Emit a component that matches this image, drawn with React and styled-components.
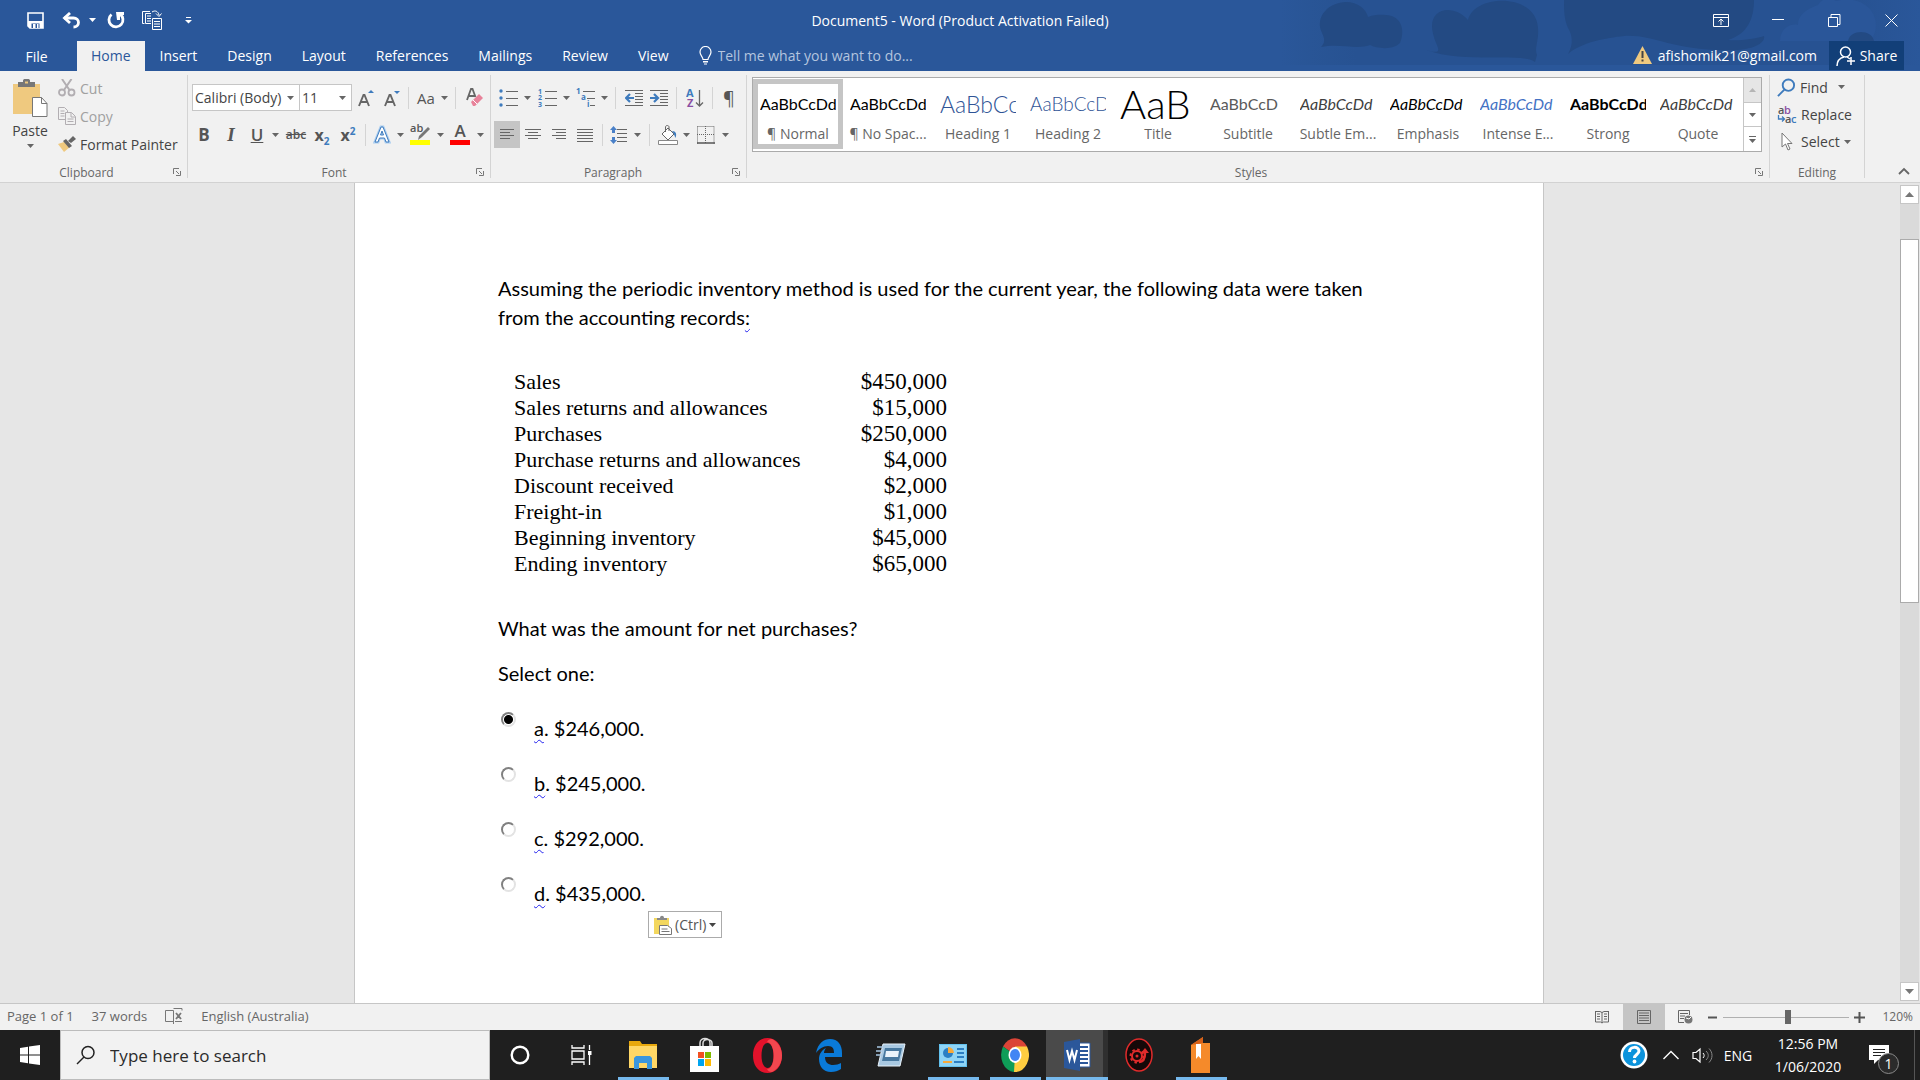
import React from "react";
import styled, { createGlobalStyle, css } from "styled-components";

const UI = `"Open Sans", "Noto Sans", sans-serif`;
const BODY = `Lato, "Open Sans", sans-serif`;
const SERIF = `"Liberation Serif", serif`;

const Global = createGlobalStyle`
  *, *::before, *::after { box-sizing: border-box; }
  body { margin: 0; font-family: ${UI}; font-size: 14px; color: #444; background: #e6e6e6; }
  button, input, select { font: inherit; color: inherit; }
  button { border: 0; background: none; padding: 0; }
  svg { display: block; flex: none; }
`;

const Shell = styled.div`
  height: 100vh;
  display: flex;
  flex-direction: column;
  overflow: hidden;
`;

/* ---------- header ---------- */
const Header = styled.header`
  position: relative;
  background: #2a579a;
  color: #fff;
`;
const Clouds = styled.svg`
  position: absolute;
  top: 0;
  right: 0;
`;
const TitleBar = styled.div`
  position: relative;
  display: grid;
  grid-template-columns: 1fr auto 1fr;
  align-items: center;
  height: 40px;
`;
const QuickAccess = styled.div`
  display: flex;
  align-items: center;
  padding-left: 18px;
`;
const Title = styled.h1`
  margin: 0;
  font-size: 14px;
  font-weight: 400;
`;
const WindowButtons = styled.div`
  display: flex;
  justify-content: flex-end;
`;
const Slot = styled.button`
  display: flex;
  align-items: center;
  justify-content: center;
  width: ${(p) => p.$w}px;
  height: ${(p) => p.$h || 27}px;
  background: ${(p) => (p.$on ? "#c5c5c5" : "transparent")};
  flex: none;
`;
const TabRow = styled.nav`
  position: relative;
  display: flex;
  height: 31px;
  padding-top: 1px;
`;
const Tab = styled.button`
  padding: 0 15px 2px;
  height: 30px;
  font-size: 14px;
  color: ${(p) => (p.$on ? "#2b579a" : "#fff")};
  background: ${(p) => (p.$on ? "#f1f1f1" : "transparent")};
  ${(p) => p.$on && css`padding: 0 14px 2px;`}
  ${(p) => p.$file && css`width: 77px; padding: 0 4px 0 0;`}
`;
const TellMe = styled.label`
  display: flex;
  align-items: center;
  gap: 6px;
  padding: 0 0 2px 15px;
  flex: 1;
  input {
    width: 240px;
    padding: 0;
    border: 0;
    outline: 0;
    background: none;
  }
  input::placeholder { color: #b4c5df; opacity: 1; }
`;
const Account = styled.button`
  display: flex;
  align-items: center;
  gap: 6px;
  margin-right: 12px;
  padding-bottom: 2px;
`;
const Share = styled.button`
  display: flex;
  align-items: center;
  justify-content: center;
  gap: 4px;
  width: 75px;
  height: 29px;
  margin-right: 16px;
  background: #123f78;
`;

/* ---------- ribbon ---------- */
const Ribbon = styled.section`
  display: flex;
  height: 112px;
  padding: 4px 0;
  background: #f1f1f1;
  border-bottom: 1px solid #d2d2d2;
`;
const Group = styled.div`
  position: relative;
  display: flex;
  flex-direction: column;
  width: ${(p) => (p.$w ? p.$w + "px" : "auto")};
  flex: ${(p) => (p.$w ? "none" : "1")};
  border-right: 1px solid #d4d4d4;
  padding-left: ${(p) => p.$pad || 0}px;
`;
const GroupBody = styled.div`
  flex: 1;
  display: flex;
  min-height: 0;
`;
const GroupFoot = styled.div`
  display: flex;
  align-items: center;
  height: 16px;
  margin-bottom: -2px;
  font-size: 12px;
  color: #666;
  span { flex: 1; text-align: center; }
  button { margin-right: 6px; }
`;
const PasteButton = styled.button`
  width: 56px;
  display: flex;
  flex-direction: column;
  align-items: center;
  padding: 4px 0 0 4px;
  gap: 3px;
  line-height: 20px;
`;
const ClipList = styled.div`
  display: flex;
  flex-direction: column;
  button {
    display: flex;
    align-items: center;
    gap: 4px;
    height: 28px;
    padding: 0 0 2px 2px;
    white-space: nowrap;
  }
  button:disabled { color: #a0a0a0; }
`;
const Rows = styled.div`
  display: flex;
  flex-direction: column;
  gap: 10px;
  padding-top: 9px;
`;
const Row = styled.div`
  display: flex;
  align-items: center;
  height: 27px;
`;
const Sep = styled.span`
  width: ${(p) => p.$w}px;
  height: 22px;
  display: flex;
  justify-content: center;
  &::before { content: ""; width: 1px; background: #d4d4d4; }
`;
const Combo = styled.div`
  display: flex;
  align-items: center;
  width: ${(p) => p.$w}px;
  height: 27px;
  padding-right: 5px;
  background: #fff;
  border: 1px solid #c6c6c6;
  & + & { border-left: 0; }
  select {
    flex: 1;
    min-width: 0;
    appearance: none;
    border: 0;
    outline: 0;
    padding: 0 0 0 2px;
    background: none;
    overflow: hidden;
  }
`;
const Glyph = styled.span`
  font-size: ${(p) => p.$s || 17}px;
  line-height: 20px;
  font-weight: ${(p) => p.$b || 400};
  font-style: ${(p) => (p.$i ? "italic" : "normal")};
  font-family: ${(p) => (p.$serif ? SERIF : UI)};
  text-decoration: ${(p) => p.$d || "none"};
  color: ${(p) => p.$c || "#555"};
  sub, sup { font-size: 10px; line-height: 0; color: #3e7bbd; }
`;
const Gallery = styled.div`
  flex: 1;
  display: flex;
  height: 75px;
  margin: 2px 7px 0 5px;
  background: #fff;
  border: 1px solid #ababab;
`;
const StyleList = styled.div`
  flex: 1;
  display: flex;
  overflow: hidden;
`;
const StyleItem = styled.button`
  display: flex;
  flex-direction: column;
  align-items: center;
  width: 90px;
  height: 70px;
  margin-top: 1px;
  flex: none;
  border: 5px solid ${(p) => (p.$on ? "#c5c5c5" : "transparent")};
  color: #666;
  white-space: nowrap;
  line-height: 20px;
`;
const Sample = styled.span`
  display: flex;
  align-items: center;
  width: 76px;
  height: 40px;
  overflow: hidden;
  font-family: ${BODY};
  font-size: ${(p) => p.$s || 16}px;
  line-height: 40px;
  color: ${(p) => p.$c || "#000"};
  font-weight: ${(p) => p.$b || 400};
  font-style: ${(p) => (p.$i ? "italic" : "normal")};
`;
const GalleryScroll = styled.div`
  width: 18px;
  display: flex;
  flex-direction: column;
  border-left: 1px solid #c6c6c6;
  button {
    flex: 1;
    display: flex;
    align-items: center;
    justify-content: center;
  }
  button:first-child { background: #e6e6e6; }
  button + button { border-top: 1px solid #c6c6c6; }
`;
const EditList = styled.div`
  display: flex;
  flex-direction: column;
  padding-left: 7px;
  button {
    display: flex;
    align-items: center;
    gap: 4px;
    height: 27px;
    padding-bottom: 2px;
  }
`;
const Collapse = styled.div`
  width: 55px;
  display: flex;
  align-items: flex-end;
  justify-content: flex-end;
  padding: 0 10px 3px 0;
`;

/* ---------- document ---------- */
const Workspace = styled.main`
  flex: 1;
  display: flex;
  min-height: 0;
  background: #e6e6e6;
`;
const Canvas = styled.div`
  flex: 1;
  display: flex;
  justify-content: center;
  min-width: 0;
  padding-right: 2px;
  overflow: hidden;
`;
const Page = styled.article`
  position: relative;
  width: 1190px;
  padding: 91px 144px 0 143px;
  background: #fff;
  border: solid #c6c6c6;
  border-width: 0 1px;
  font-family: ${BODY};
  font-size: 20px;
  line-height: 29px;
  color: #000;
  p { margin: 0 0 16px; }
`;
const Wavy = styled.span`
  text-decoration: underline wavy #2222ee 1px;
  text-underline-offset: 3px;
`;
const Ledger = styled.table`
  width: 433px;
  margin: 37px 0 37px 16px;
  border-collapse: collapse;
  font-family: ${SERIF};
  font-size: 22px;
  line-height: 26px;
  td, th { padding: 0; font-weight: 400; text-align: left; }
  td { font-size: 23px; text-align: right; }
`;
const Options = styled.fieldset`
  margin: 0;
  padding: 0;
  border: 0;
  legend { padding: 0; margin-bottom: 12px; }
`;
const Option = styled.label`
  display: flex;
  align-items: flex-start;
  gap: 18px;
  height: 55px;
  padding-left: 3px;
  span.text { padding-top: 14px; }
  input {
    appearance: none;
    width: 15px;
    height: 15px;
    margin: 12px 0 0;
    border: 2px solid;
    border-color: #808080 #e3e3e3 #e3e3e3 #808080;
    border-radius: 50%;
    background: #fff;
  }
  input:checked { background: radial-gradient(circle, #000 4px, #fff 5px); }
`;
const PasteTag = styled.button`
  position: absolute;
  left: 293px;
  top: 728px;
  display: flex;
  align-items: center;
  gap: 3px;
  width: 74px;
  height: 27px;
  padding-left: 4px;
  background: #fff;
  border: 1px solid #ababab;
  font-family: ${UI};
  font-size: 14px;
  color: #555;
`;
const ScrollBar = styled.div`
  width: 20px;
  padding: 2px 1px 2px 0;
  display: flex;
  flex-direction: column;
`;
const ScrollButton = styled.button`
  height: 19px;
  display: flex;
  align-items: center;
  justify-content: center;
  background: #fff;
  border: 1px solid #c6c6c6;
`;
const Track = styled.div`
  flex: 1;
  padding-top: 35px;
  background: #dadada;
`;
const Thumb = styled.div`
  height: 49%;
  background: #fff;
  border: 1px solid #ababab;
`;

/* ---------- status bar ---------- */
const Status = styled.footer`
  display: flex;
  align-items: center;
  height: 27px;
  padding: 0 7px;
  background: #f1f1f1;
  border-top: 1px solid #c6c6c6;
  font-size: 13px;
  line-height: 24px;
  color: #666;
`;
const StatusLeft = styled.div`
  flex: 1;
  display: flex;
  align-items: center;
  gap: 18px;
  padding-bottom: 2px;
`;
const ZoomRange = styled.input`
  appearance: none;
  width: 126px;
  height: 16px;
  margin: 0 4px;
  background: linear-gradient(#b0b0b0, #b0b0b0) center / 100% 1px no-repeat;
  &::-webkit-slider-thumb {
    appearance: none;
    width: 6px;
    height: 14px;
    background: #666;
  }
`;
const Percent = styled.span`
  width: 48px;
  font-size: 12px;
  text-align: right;
`;

/* ---------- taskbar ---------- */
const Taskbar = styled.footer`
  display: flex;
  height: 50px;
  background: #1f1f1f;
  color: #fff;
`;
const Search = styled.label`
  display: flex;
  align-items: center;
  gap: 14px;
  width: 430px;
  padding-left: 15px;
  background: #f2f2f2;
  border: 1px solid #bcbcbc;
  color: #222;
  font-size: 17px;
  input { flex: 1; border: 0; padding: 0; outline: 0; background: none; }
  input::placeholder { color: #2b2b2b; opacity: 1; }
`;
const AppButton = styled.button`
  display: flex;
  align-items: center;
  justify-content: center;
  width: ${(p) => p.$w || 62}px;
  height: 50px;
  background:
    ${(p) => (p.$run ? `linear-gradient(#76b9ed, #76b9ed) bottom / ${p.$on ? 62 : 51}px 3px no-repeat,` : "")}
    ${(p) => (p.$on ? "linear-gradient(90deg, #4a4a4a 57px, #2f2f2f 57px)" : "none")};
`;
const Tray = styled.div`
  flex: 1;
  display: flex;
  justify-content: flex-end;
  align-items: center;
  padding-right: 5px;
`;
const Clock = styled.time`
  width: 96px;
  text-align: center;
  font-size: 14px;
  line-height: 23px;
`;
const ShowDesktop = styled.span`
  height: 50px;
  margin-left: 12px;
  border-left: 1px solid #555;
`;
const BadgeWrap = styled.span`
  position: relative;
`;
const Badge = styled.span`
  position: absolute;
  left: 9px;
  top: 8px;
  width: 21px;
  height: 21px;
  border: 1px solid #8a8a8a;
  border-radius: 50%;
  background: #2b2b2b;
  font-size: 14px;
  line-height: 19px;
  text-align: center;
`;

/* ---------- icons ---------- */
const Svg = ({ w = 18, h = w, children, ...r }) => (
  <svg width={w} height={h} viewBox={`0 0 ${w} ${h}`} fill="none" aria-hidden="true" {...r}>{children}</svg>
);
const Caret = ({ c = "#666", up }) => (
  <Svg w={7} h={4}><path d={up ? "M0 4 3.5 0 7 4z" : "M0 0h7L3.5 4z"} fill={c} /></Svg>
);
const Drop = ({ w = 8 }) => <Slot $w={w} aria-label="More"><Caret /></Slot>;
const Lines = ({ rows, w = 18 }) => (
  <Svg w={w} h={18} stroke="#666">
    {rows.map(([a, b], i) => <path key={i} d={`M${a} ${3.5 + i * 3}H${b}`} />)}
  </Svg>
);
const Launcher = () => (
  <button aria-label="Group settings">
    <Svg w={8} h={8}><path d="M.5 6V.5H6M3 3l3 3M7.5 3v4.5H3" stroke="#777" /></Svg>
  </button>
);
const Foot = ({ children, plain }) => <GroupFoot><span>{children}</span>{!plain && <Launcher />}</GroupFoot>;

const SaveIcon = () => (
  <Svg w={17}><path d="M1 1h15v15H3l-2-2z" stroke="#fff" strokeWidth="1.6" /><path d="M1 9h15v7H3l-2-2z" fill="#fff" /><path d="M4.5 11.5h8V16h-8z" fill="#2a579a" /><path d="M6 12h2.5v4H6zM10 12h1.5v4H10z" fill="#fff" /><path d="M3 2h11v7H3z" fill="#2a579a" /></Svg>
);
const UndoIcon = () => (
  <Svg w={19} h={17}><path d="M2 6h9.500c3 0 5 2 5 4.500S14.500 15 11.500 15" stroke="#fff" strokeWidth="2.800" /><path d="M8 1 2.500 6 8 11" stroke="#fff" strokeWidth="2.800" /></Svg>
);
const RedoIcon = () => (
  <Svg w={18} h={18}><path d="M4.500 3.500a7 7 0 1 0 8.500-.3" stroke="#fff" strokeWidth="2.800" /><path d="M9 1h8v3h-4v5h-3z" fill="#fff" /></Svg>
);
const PagesIcon = () => (
  <Svg w={20} h={20} stroke="#fff"><path d="M8 1.500H.5v12h2M9 3.500H3.500v10H9M5 6h4M5 8.500h4M5 11h4" /><path d="M10.500 8.500h9v11h-9zM12 11.500h6M12 14h6M12 16.500h6" /><path d="M10 2c3-2 6-1 7 3M14 3.500l3 3 2.500-3" /></Svg>
);
const BulbIcon = () => (
  <Svg w={13} h={19}><path d="M4 13.500c0-2.500-3-4-3-7.500a5.500 5.500 0 0 1 11 0c0 3.500-3 5-3 7.500z" stroke="#fff" strokeWidth="1.200" /><path d="M4 15h5v1.500H4zM5 17.500h3v1H5z" fill="#fff" /></Svg>
);
const PasteIcon = () => (
  <Svg w={35} h={39}><path d="M0 5h27v30H0z" fill="#efc97f" /><path d="M5 3h5V1.500C10 .5 11 0 12 0h3c1 0 2 .5 2 1.500V3h5v5H5z" fill="#777" /><path d="M12 2.500h3v2h-3z" fill="#efc97f" /><path d="M19.500 18.500h9l5.500 6v13H19.500z" fill="#fff" stroke="#777" /><path d="M28.500 18.500v6H34" stroke="#777" /></Svg>
);
const CutIcon = () => (
  <Svg w={18} h={18} stroke="#b2aeb2" strokeWidth="1.800"><path d="M4 0l7.500 11M13.500 0 6 11" strokeWidth="2" /><circle cx="4" cy="13.500" r="3" /><circle cx="13.500" cy="13.500" r="3" /></Svg>
);
const CopyIcon = () => (
  <Svg w={18} h={18} stroke="#b2aeb2"><path d="M7 12.500H.5v-12h6l3 3V5M2.500 4h4M2.500 6.500h4M2.500 9h4" /><path d="M7.500 5.500h6l4 4v8h-10zM13 5.500V10h4M9.500 12h6M9.500 14.500h6" /></Svg>
);
const PainterIcon = () => (
  <Svg w={18} h={17}><path d="M0 8l6-2 6 5-6 5z" fill="#efc97f" /><path d="M5 5l3-2 6 7-3 2z" fill="#666" /><path d="M10 5l5-5 3 3-5 4z" fill="#666" /></Svg>
);
const EraserIcon = () => (
  <Svg w={18} h={19}><path d="M1 12 5 1h1.500l3 8M2.500 8h6" stroke="#666" strokeWidth="1.800" /><path d="M5 14l8-8 4 4-8 8H7z" fill="#e8829a" /><path d="M7 12l4 4" stroke="#fff" /></Svg>
);
const SizeIcon = ({ down }) => (
  <Svg w={16} h={18}><path d="M1 17 5.500 6h1L11 17M3 13h6" stroke="#666" strokeWidth="1.900" /><path d={down ? "M10 2h6l-3 3z" : "M10 4h6l-3-3z"} fill="#3e7bbd" /></Svg>
);
const EffectIcon = () => (
  <Svg w={18} h={19}><path d="M2 17 8 2h2l6 15h-3l-1.500-4h-5L5 17zM7.500 10h3L9 6z" stroke="#a9cdf0" strokeWidth="3" /><path d="M2 17 8 2h2l6 15h-3l-1.500-4h-5L5 17zM7.500 10h3L9 6z" fill="#fff" stroke="#3e7bbd" /></Svg>
);
const ColourMark = styled.span`
  position: relative;
  display: flex;
  justify-content: ${(p) => (p.$mid ? "center" : "flex-start")};
  width: 20px;
  height: 21px;
  border-bottom: 5px solid ${(p) => p.$c};
  span { line-height: ${(p) => (p.$mid ? 14 : 8)}px; }
  svg { position: absolute; right: 0; top: 3px; }
`;
const List = ({ kind }) => (
  <Svg w={19} h={19}>
    <path d={kind === "multi" ? "M7 3.500h12M11 10.500h8M14 17.500h5" : "M7 3.500h12M7 10.500h12M7 17.500h12"} stroke="#666" />
    {kind === "dot" && [3, 10, 17].map((y) => <circle key={y} cx="2" cy={y} r="1.700" fill="#3e7bbd" />)}
    {kind !== "dot" && (
      <g fill="#3e7bbd" fontFamily="Open Sans" fontWeight="700" fontSize={kind === "num" ? 7 : 8}>
        <text x="0" y="6">1</text>
        <text x={kind === "num" ? 0 : 5} y="12">{kind === "num" ? "2" : "a"}</text>
        <text x={kind === "num" ? 0 : 11} y="19">{kind === "num" ? "3" : "i"}</text>
      </g>
    )}
  </Svg>
);
const IndentIcon = ({ right }) => (
  <Svg w={19} h={19}><path d="M0 2.500h18M10 5.500h8M10 8.500h8M10 11.500h8M10 14.500h8M0 17.500h18" stroke="#666" /><path d={right ? "M0 10h7M4 6l4 4-4 4" : "M9 10H2M5 6l-4 4 4 4"} stroke="#3e7bbd" strokeWidth="2.200" /></Svg>
);
const SortIcon = () => (
  <Svg w={18} h={20}><g fontFamily="Open Sans" fontWeight="700" fontSize="11"><text x="0" y="9" fill="#3e7bbd">A</text><text x="1" y="19" fill="#8a4fa3">Z</text></g><path d="M13.500 2v16M10 14.500l3.500 3.500 3.500-3.500" stroke="#666" strokeWidth="1.300" /></Svg>
);
const SpacingIcon = () => (
  <Svg w={18} h={20}><path d="M7 4.500h10M7 8.500h10M7 12.500h10M7 16.500h10" stroke="#666" /><path d="M3.500 1 7 5H5v3H2V5H0zM3.500 19 7 15H5v-3H2v3H0z" fill="#4a80c8" /></Svg>
);
const FillIcon = () => (
  <Svg w={21} h={20}><path d="M4 9l6-6 6 6-6 6z" fill="#fff" stroke="#666" /><path d="M7.500 7V2c0-2 3.500-2 3.500 0v4" stroke="#666" /><path d="M14 6c4 0 5 3 3.500 7-1-2-1-4-3.500-7z" fill="#3e7bbd" /><path d="M.5 15.500h19v4H.5z" fill="#fff" stroke="#888" /></Svg>
);
const BorderIcon = () => (
  <Svg w={18} h={18}><path d="M.5.5v17M17 .5v17M.5.5H17M8.500 0v17M0 8.500h17" stroke="#666" strokeDasharray="1 1" /><path d="M0 17h18" stroke="#555" strokeWidth="1.500" /></Svg>
);
const Lens = ({ s = 19, c = "#3e7bbd", sw = 2 }) => (
  <svg width={s} height={s} viewBox="0 0 20 20" fill="none" aria-hidden="true"><circle cx="12" cy="7.500" r="6" stroke={c} strokeWidth={sw} /><path d="M8 12 1 19" stroke={c} strokeWidth={sw} /></svg>
);
const ReplaceIcon = () => (
  <Svg w={20} h={19}><g fontFamily="Open Sans" fontWeight="600" fontSize="11"><text x="1" y="9" fill="#555">a</text><text x="7" y="9" fill="#8a4fa3">b</text><text x="8" y="18" fill="#555">a</text><text x="14" y="18" fill="#3e7bbd">c</text></g><path d="M1.500 10v4H7M5 11.500 7.500 14 5 16.500" stroke="#3e7bbd" strokeWidth="1.300" /></Svg>
);
const CursorIcon = () => (
  <Svg w={20} h={19}><path d="M5 1v14l3.500-3 2.500 6 2-1-2.500-5.500H15z" fill="#fff" stroke="#777" /></Svg>
);

const styleItems = [
  { n: "¶ Normal" }, { n: "¶ No Spac..." },
  { n: "Heading 1", s: 23, c: "#2f5496", b: 300 }, { n: "Heading 2", s: 19, c: "#2f5496", b: 300 },
  { n: "Title", s: 40, t: "AaB", b: 300 }, { n: "Subtitle", s: 16, c: "#5a5a5a", t: "AaBbCcD" },
  { n: "Subtle Em...", i: 1, c: "#404040" }, { n: "Emphasis", i: 1 },
  { n: "Intense E...", i: 1, c: "#4472c4" }, { n: "Strong", b: 700 },
  { n: "Quote", i: 1, c: "#404040" },
];
const ledger = [
  ["Sales", "$450,000"], ["Sales returns and allowances", "$15,000"], ["Purchases", "$250,000"],
  ["Purchase returns and allowances", "$4,000"], ["Discount received", "$2,000"], ["Freight-in", "$1,000"],
  ["Beginning inventory", "$45,000"], ["Ending inventory", "$65,000"],
];
const answers = [["a", "$246,000."], ["b", "$245,000."], ["c", "$292,000."], ["d", "$435,000."]];
const tabs = ["Home", "Insert", "Design", "Layout", "References", "Mailings", "Review", "View"];

/* taskbar apps */
const ExplorerIcon = () => <Svg w={28} h={28}><path d="M0 0h11l2 3h15v24H0z" fill="#e8a80c" /><path d="M0 5h28v22H0z" fill="#ffd766" /><path d="M5 28V17l2-2h14l2 2v11h-5v-6h-8v6z" fill="#3a96dd" /></Svg>;
const StoreIcon = () => <Svg w={30} h={36}><path d="M10 10V6c0-6 10-6 10 0v4M13 10V6c0-5 9-4 9 0v4" stroke="#ddd" strokeWidth="1.500" /><path d="M0 9h29v26H0z" fill="#fff" /><path d="M8 15h6v6H8z" fill="#f25022" /><path d="M15 15h6v6h-6z" fill="#7fba00" /><path d="M8 22h6v7H8z" fill="#00a4ef" /><path d="M15 22h6v7h-6z" fill="#ffb900" /></Svg>;
const OperaIcon = () => <Svg w={29} h={35}><path fillRule="evenodd" d="M14.500 0C6 0 0 7 0 17.500S6 35 14.500 35 29 28 29 17.500 23 0 14.500 0zm0 5c4 0 6 6 6 12.500s-2 12.500-6 12.500-6-6-6-12.500 2-12.500 6-12.500z" fill="#e3122b" /><path d="M19 1c6 3 10 9 10 16.500S25 31 19 34c-3 0-4-1-5-3 9 0 9-26 0-27 1-2 2-3 5-3z" fill="#f2474f" /></Svg>;
const EdgeIcon = () => <Svg w={26} h={33}><path d="M0 14C2 4 8 0 14 0c8 0 12 6 12 14v4H9c0 6 4 8 8 8 3 0 6-1 8-2v6c-3 2-6 3-10 3C7 33 3 27 3 20c0-5 3-9 7-11-1 1-2 3-2 5h10c0-4-1-7-6-7-5 0-9 3-12 7z" fill="#0a7ad8" /></Svg>;
const RunIcon = () => <Svg w={30} h={24}><path d="M7 1h22l-5 22H2z" fill="#a9c9e2" stroke="#e8f2fa" /><path d="M9 5h17l-3 13H6z" fill="#47789f" /><path d="M10 8h13l-1 6H9z" fill="#e9f3fb" /><path d="M1 4h7M0 8h6M0 12h5" stroke="#a8c8e4" strokeWidth="1.500" /></Svg>;
const PanelIcon = () => <Svg w={28} h={23}><path d="M0 0h28v23H0z" fill="#62c1ee" /><path d="M1 1h26v21H1z" fill="#8fd4f6" /><circle cx="9" cy="9" r="5" fill="#2c7fc4" /><path d="M9 9V3a6 6 0 0 1 6 6z" fill="#f8a93a" /><path d="M18 4h7v2h-7zM18 8h7v2h-7zM18 12h7v2h-7z" fill="#2c7fc4" /><path d="M4 18h9" stroke="#f8a93a" strokeWidth="2" /><path d="M15 18h10" stroke="#2c7fc4" strokeWidth="2" /></Svg>;
const ChromeIcon = () => <svg width="28" height="34" viewBox="0 0 28 28" preserveAspectRatio="none" aria-hidden="true"><path d="M14 14 2 7a14 14 0 0 1 24 0z" fill="#db4437" /><path d="M14 14 2 7a14 14 0 0 0 11 21l7-11z" fill="#0f9d58" /><path d="M14 14l-1 14A14 14 0 0 0 26 7H14z" fill="#ffcd40" /><circle cx="14" cy="14" r="6.500" fill="#fff" /><circle cx="14" cy="14" r="5" fill="#4285f4" /></svg>;
const WordIcon = () => <Svg w={27} h={32}><path d="M14 4h12v24H14z" fill="#fff" stroke="#2b579a" /><path d="M16 8h8M16 12h8M16 16h8M16 20h8M16 24h8" stroke="#2b579a" strokeWidth="1.800" /><path d="M0 3l16-3v32L0 29z" fill="#2b579a" /><path d="M3 11l2.500 10L8 12l2.500 9L13 11" stroke="#fff" strokeWidth="2" /></Svg>;
const DriverIcon = () => <Svg w={28} h={34}><ellipse cx="14" cy="17" rx="13" ry="16" fill="#160808" stroke="#e02b2b" strokeWidth="1.500" /><circle cx="12" cy="18" r="5" stroke="#e02b2b" strokeWidth="2" /><circle cx="12" cy="18" r="6.500" stroke="#e02b2b" strokeWidth="2" strokeDasharray="2.500 2.500" /><circle cx="12" cy="18" r="1.500" fill="#e02b2b" /><path d="M14 24c5 0 6-4 6-9" stroke="#e02b2b" strokeWidth="2.500" /><path d="M16 15l4-5 4 5z" fill="#e02b2b" /></Svg>;
const BookIcon = () => <Svg w={20} h={37}><path d="M0 8 12 0v6h7v30H0z" fill="#f58a2a" /><path d="M0 8 12 0v6z" fill="#d4601a" /><path d="M5 7h5v15l-2.500-3L5 22z" fill="#fff" /></Svg>;

const apps = [
  ["File Explorer", ExplorerIcon, 1], ["Microsoft Store", StoreIcon], ["Opera", OperaIcon], ["Edge", EdgeIcon],
  ["Run", RunIcon], ["Control Panel", PanelIcon, 1], ["Chrome", ChromeIcon, 1], ["Word", WordIcon, 1, 1],
  ["Driver Booster", DriverIcon], ["Reader", BookIcon, 1],
];

function Top() {
  return (
    <Header>
      <Clouds width="640" height="65" viewBox="0 0 640 65" aria-hidden="true">
        <defs><linearGradient id="sky"><stop offset="0" stopColor="#27528f" stopOpacity="0" /><stop offset=".12" stopColor="#275292" /><stop offset=".9" stopColor="#275292" /><stop offset="1" stopColor="#275292" stopOpacity="0" /></linearGradient></defs>
        <path d="M0 0h640v65H0z" fill="url(#sky)" />
        <g fill="#234a83">
          <path d="M41 47c4-4 4-8 1-14C34 16 50 2 66 2c12 0 20 7 22 15 8-3 14-2 18-2 14 0 20 14 14 28-8 8-24 5-30 2-14 5-30-2-49 2z" />
          <path d="M146 50c20 6 10-4 8-13-10-30 20-34 34-17C194-6 256-8 258 28c1 14-4 20-1 27l-2 7c-12-10-70 2-109-12z" />
          <path d="M284 0h190c0 18-6 34-26 40 12 1 26-1 36-4 2 8-14 14-30 14-60 2-80-16-110-14-18 2-42 6-56 18 6-10 4-20 0-26-4-9-4-18-4-28z" />
        </g>
        <path d="M500 41c0-12 10-18 18-16 0-12 12-17 20-20 4-7 12-8 18-4 24-6 40 8 40 24 0 10-6 16-6 16z" fill="#2a5699" />
        <path d="M568 41c2-12 24-12 26 0z" fill="#234a83" />
      </Clouds>
      <TitleBar>
        <QuickAccess>
          <Slot $w={34} aria-label="Save"><SaveIcon /></Slot>
          <Slot $w={38} aria-label="Undo"><UndoIcon /></Slot>
          <Slot $w={4} aria-label="Undo list"><Caret c="#fff" /></Slot>
          <Slot $w={44} aria-label="Redo"><RedoIcon /></Slot>
          <Slot $w={28} aria-label="Pages"><PagesIcon /></Slot>
          <Slot $w={44} aria-label="Customise"><Svg w={7} h={7}><path d="M1 .5h5" stroke="#fff" /><path d="M0 3h7L3.5 6.5z" fill="#fff" /></Svg></Slot>
        </QuickAccess>
        <Title>Document5 - Word (Product Activation Failed)</Title>
        <WindowButtons>
          <Slot $w={57} aria-label="Ribbon options"><Svg w={16} h={13} stroke="#fff"><path d="M.5.5h15v12H.5zM.5 3.500h15M8 11V5M5.500 7.500 8 5l2.500 2.500" /></Svg></Slot>
          <Slot $w={57} aria-label="Minimise"><Svg w={12} h={2}><path d="M0 .5h12" stroke="#fff" /></Svg></Slot>
          <Slot $w={57} aria-label="Restore"><Svg w={13} h={13} stroke="#fff"><path d="M.5 3.500h9v9h-9zM3 3V.5h9v10h-2" /></Svg></Slot>
          <Slot $w={57} aria-label="Close"><Svg w={13} h={13} stroke="#fff"><path d="M.5.5l12 12M12.500.5l-12 12" /></Svg></Slot>
        </WindowButtons>
      </TitleBar>
      <TabRow>
        <Tab $file>File</Tab>
        {tabs.map((t) => <Tab key={t} $on={t === "Home"}>{t}</Tab>)}
        <TellMe><BulbIcon /><input aria-label="Tell me" placeholder="Tell me what you want to do..." /></TellMe>
        <Account>
          <Svg w={19} h={18}><path d="M9.500 0 19 18H0z" fill="#efc97f" /><path d="M9.500 5v7M9.500 13.500v2" stroke="#444" strokeWidth="2" /></Svg>
          afishomik21@gmail.com
        </Account>
        <Share>
          <Svg w={20} h={20} stroke="#fff" strokeWidth="1.500"><circle cx="9.500" cy="6" r="5" /><path d="M1 20c0-5 3-8 7-9M11 11l3 2M15 11v8M11 15h8" /></Svg>
          Share
        </Share>
      </TabRow>
    </Header>
  );
}

function RibbonBar() {
  return (
    <Ribbon>
      <Group $w={188}>
        <GroupBody>
          <PasteButton><PasteIcon /><span>Paste</span><Caret /></PasteButton>
          <ClipList>
            <button disabled><CutIcon />Cut</button>
            <button disabled><CopyIcon />Copy</button>
            <button><PainterIcon />Format Painter</button>
          </ClipList>
        </GroupBody>
        <Foot>Clipboard</Foot>
      </Group>
      <Group $w={303} $pad={4}>
        <GroupBody>
          <Rows>
            <Row>
              <Combo $w={108}><select aria-label="Font"><option>Calibri (Body)</option></select><Caret /></Combo>
              <Combo $w={52}><select aria-label="Font size"><option>11</option></select><Caret /></Combo>
              <Slot $w={28} aria-label="Grow font"><SizeIcon /></Slot>
              <Slot $w={24} aria-label="Shrink font"><SizeIcon down /></Slot>
              <Sep $w={8} />
              <Slot $w={28}><Glyph $s={15}>Aa</Glyph></Slot>
              <Drop />
              <Sep $w={14} />
              <Slot $w={26} aria-label="Clear formatting"><EraserIcon /></Slot>
            </Row>
            <Row>
              <Slot $w={24}><Glyph $b={700}>B</Glyph></Slot>
              <Slot $w={30}><Glyph $b={700} $i $serif $s={19}>I</Glyph></Slot>
              <Slot $w={22}><Glyph $b={600} $d="underline">U</Glyph></Slot>
              <Drop w={14} />
              <Slot $w={28}><Glyph $s={12} $b={600} $d="line-through">abc</Glyph></Slot>
              <Slot $w={24}><Glyph $s={16} $b={700}>x<sub>2</sub></Glyph></Slot>
              <Slot $w={28}><Glyph $s={16} $b={700}>x<sup>2</sup></Glyph></Slot>
              <Sep $w={6} />
              <Slot $w={28} aria-label="Text effects"><EffectIcon /></Slot>
              <Drop />
              <Slot $w={32}><ColourMark $c="#ffff00"><Glyph $s={11} $b={600}>ab</Glyph><Svg w={13} h={13}><path d="M1 13l1-4L11 0l2 2-8 8z" fill="#777" /></Svg></ColourMark></Slot>
              <Drop />
              <Slot $w={32}><ColourMark $c="#ff0000" $mid><Glyph $s={17} $b={600}>A</Glyph></ColourMark></Slot>
              <Drop />
            </Row>
          </Rows>
        </GroupBody>
        <Foot>Font</Foot>
      </Group>
      <Group $w={256} $pad={3}>
        <GroupBody>
          <Rows>
            <Row>
              <Slot $w={28} aria-label="Bullets"><List kind="dot" /></Slot><Drop w={10} />
              <Slot $w={30} aria-label="Numbering"><List kind="num" /></Slot><Drop />
              <Slot $w={30} aria-label="Multilevel"><List kind="multi" /></Slot><Drop />
              <Sep $w={14} />
              <Slot $w={24} aria-label="Decrease indent"><IndentIcon /></Slot>
              <Slot $w={26} aria-label="Increase indent"><IndentIcon right /></Slot>
              <Sep $w={8} />
              <Slot $w={30} aria-label="Sort"><SortIcon /></Slot>
              <Sep $w={4} />
              <Slot $w={30}><Glyph $s={18}>¶</Glyph></Slot>
            </Row>
            <Row>
              <Slot $w={26} $on aria-label="Left"><Lines w={16} rows={[[1, 15], [1, 11], [1, 15], [1, 11]]} /></Slot>
              <Slot $w={26} aria-label="Centre"><Lines w={16} rows={[[0, 16], [3, 13], [0, 16], [3, 13]]} /></Slot>
              <Slot $w={26} aria-label="Right"><Lines w={16} rows={[[1, 15], [5, 15], [1, 15], [5, 15]]} /></Slot>
              <Slot $w={26} aria-label="Justify"><Lines w={16} rows={[[0, 16], [0, 16], [0, 16], [0, 16], [0, 16]]} /></Slot>
              <Sep $w={8} />
              <Slot $w={26} aria-label="Line spacing"><SpacingIcon /></Slot><Drop w={10} />
              <Sep $w={14} />
              <Slot $w={24} aria-label="Shading"><FillIcon /></Slot><Drop w={12} />
              <Slot $w={28} aria-label="Borders"><BorderIcon /></Slot><Drop w={10} />
            </Row>
          </Rows>
        </GroupBody>
        <Foot>Paragraph</Foot>
      </Group>
      <Group>
        <GroupBody>
          <Gallery>
            <StyleList>
              {styleItems.map((s, k) => (
                <StyleItem key={s.n} $on={k === 0}>
                  <Sample $s={s.s} $c={s.c} $i={s.i} $b={s.b}>{s.t || "AaBbCcDd"}</Sample>
                  {s.n}
                </StyleItem>
              ))}
            </StyleList>
            <GalleryScroll>
              <button aria-label="Previous styles"><Caret up c="#b5b5b5" /></button>
              <button aria-label="Next styles"><Caret /></button>
              <button aria-label="All styles"><Svg w={7} h={7}><path d="M0 .5h7" stroke="#666" /><path d="M0 3h7L3.5 7z" fill="#666" /></Svg></button>
            </GalleryScroll>
          </Gallery>
        </GroupBody>
        <Foot>Styles</Foot>
      </Group>
      <Group $w={95}>
        <GroupBody>
          <EditList>
            <button><Lens />Find<Drop w={20} /></button>
            <button><ReplaceIcon />Replace</button>
            <button><CursorIcon />Select<Caret /></button>
          </EditList>
        </GroupBody>
        <Foot plain>Editing</Foot>
      </Group>
      <Collapse><button aria-label="Collapse ribbon"><Svg w={12} h={8}><path d="M1 7l5-5 5 5" stroke="#666" strokeWidth="1.8" /></Svg></button></Collapse>
    </Ribbon>
  );
}

function Doc() {
  return (
    <Workspace>
      <Canvas>
        <Page>
          <div>Assuming the periodic inventory method is used for the current year, the following data were taken from the accounting records<Wavy>:</Wavy></div>
          <Ledger>
            <tbody>{ledger.map(([a, b]) => <tr key={a}><th scope="row">{a}</th><td>{b}</td></tr>)}</tbody>
          </Ledger>
          <p>What was the amount for net purchases?</p>
          <Options>
            <legend>Select one:</legend>
            {answers.map(([k, v], i) => (
              <Option key={k}>
                <input type="radio" name="answer" defaultChecked={i === 0} />
                <span className="text"><Wavy>{k}</Wavy>. {v}</span>
              </Option>
            ))}
          </Options>
          <PasteTag>
            <Svg w={19} h={20}><path d="M1 3h15v16H1z" fill="#f3d75e" /><path d="M4 5V3h3c0-3 4-3 4 0h3v2z" fill="#888" /><path d="M6.500 10.500h8l4 3v6h-12z" fill="#fff" stroke="#777" /><path d="M8.500 14h6M8.500 16.500h8" stroke="#777" /></Svg>
            (Ctrl)
            <Caret c="#444" />
          </PasteTag>
        </Page>
      </Canvas>
      <ScrollBar>
        <ScrollButton aria-label="Scroll up"><Svg w={9} h={5}><path d="M0 5 4.500 0 9 5z" fill="#777" /></Svg></ScrollButton>
        <Track><Thumb /></Track>
        <ScrollButton aria-label="Scroll down"><Svg w={9} h={5}><path d="M0 0h9L4.500 5z" fill="#777" /></Svg></ScrollButton>
      </ScrollBar>
    </Workspace>
  );
}

function StatusBar() {
  return (
    <Status>
      <StatusLeft>
        <span>Page 1 of 1</span>
        <span>37 words</span>
        <Svg w={18} h={16} stroke="#777"><path d="M8.500 2.500H.5v11h8V16M8.500 14V2.500M8.500.5h8.500v2M10 13.500h7" /><path d="M11 5l5 6M16 5l-5 6" strokeWidth="1.800" /></Svg>
        <span>English (Australia)</span>
      </StatusLeft>
      <Slot $w={42} $h={26} aria-label="Read mode"><Svg w={14} h={14} stroke="#666"><path d="M0 1.500h5l2 1 2-1h5M.5 1v11h5l1.500 1 1.500-1h5V1M7 2v11M2 4h3M2 6.500h3M2 9h3M9 4h3M9 6.500h3M9 9h3" /></Svg></Slot>
      <Slot $w={42} $h={26} $on aria-label="Print layout"><Svg w={14} h={14} stroke="#666"><path d="M.5.5h13v13H.5zM2 3h10M2 5.500h10M2 8h10M2 10.500h10" /></Svg></Slot>
      <Slot $w={40} $h={26} aria-label="Web layout"><Svg w={15} h={14}><path d="M6 12.500H.5V.5h11V5M2 3.500h8M2 6h5M2 8.500h4" stroke="#666" /><circle cx="10.500" cy="9.500" r="4" fill="#777" /><path d="M8 8l3 1 2-2" stroke="#fff" /></Svg></Slot>
      <Slot $w={14} aria-label="Zoom out"><Svg w={9} h={3}><path d="M0 1.500h9" stroke="#555" strokeWidth="2" /></Svg></Slot>
      <ZoomRange type="range" min="0" max="100" defaultValue="52" aria-label="Zoom" />
      <Slot $w={12} aria-label="Zoom in"><Svg w={11} h={11}><path d="M0 5.500h11M5.500 0v11" stroke="#555" strokeWidth="2" /></Svg></Slot>
      <Percent>120%</Percent>
    </Status>
  );
}

function Tasks() {
  return (
    <Taskbar>
      <AppButton $w={60} aria-label="Start"><Svg w={20} h={20}><path d="M0 3l8-1.200V9.500H0zM9 1.500 20 0v9.500H9zM0 10.500h8v7.700L0 17zM9 10.500h11V20L9 18.500z" fill="#fff" /></Svg></AppButton>
      <Search><Lens s={20} c="#222" sw={1.5} /><input aria-label="Search" placeholder="Type here to search" /></Search>
      <AppButton $w={60} aria-label="Cortana"><Svg w={20} h={20}><circle cx="10" cy="10" r="8.300" stroke="#fff" strokeWidth="2.400" /></Svg></AppButton>
      <AppButton aria-label="Task view"><Svg w={21} h={20} stroke="#fff" strokeWidth="1.300"><path d="M1 0v3h12V0M1 6h12v8H1zM1 20v-3h12v3M18.500 0v5M18.500 10v10" /><path d="M17 6h3.500v4H17z" fill="#fff" stroke="none" /></Svg></AppButton>
      {apps.map(([n, Icon, run, on]) => <AppButton key={n} $run={run} $on={on} aria-label={n}><Icon /></AppButton>)}
      <Tray>
        <Slot $w={40} aria-label="Help"><Svg w={28} h={28}><circle cx="14" cy="14" r="13.500" fill="#fff" /><circle cx="14" cy="14" r="11" fill="#0c93dc" /><path d="M9.500 11c0-6 9.500-6 9.500-1 0 3.500-4.500 3.500-4.500 7" stroke="#fff" strokeWidth="3" /><circle cx="14.500" cy="20.500" r="1.900" fill="#fff" /></Svg></Slot>
        <Slot $w={34} aria-label="Hidden icons"><Svg w={16} h={10}><path d="M.5 9 8 1.500 15.500 9" stroke="#fff" strokeWidth="1.400" /></Svg></Slot>
        <Slot $w={28} aria-label="Volume"><Svg w={21} h={17}><path d="M1 5.500h3L8 2v13l-4-3.500H1z" stroke="#fff" strokeWidth="1.200" /><path d="M11 6c1.500 1.500 1.500 3.500 0 5" stroke="#fff" /><path d="M14 4c3 3 3 6 0 9M17 1.500c4 4 4 10 0 14" stroke="#888" /></Svg></Slot>
        <Slot $w={44}>ENG</Slot>
        <Clock>12:56 PM<br />1/06/2020</Clock>
        <Slot $w={46} aria-label="Notifications"><BadgeWrap><Svg w={20} h={20}><path d="M0 0h20v15H9l-4 4v-4H0z" fill="#fff" /><path d="M4 4.500h12M4 7.500h12M4 10.500h8" stroke="#222" /></Svg><Badge>1</Badge></BadgeWrap></Slot>
        <ShowDesktop />
      </Tray>
    </Taskbar>
  );
}

export default function App() {
  return (
    <Shell>
      <Global />
      <Top />
      <RibbonBar />
      <Doc />
      <StatusBar />
      <Tasks />
    </Shell>
  );
}
